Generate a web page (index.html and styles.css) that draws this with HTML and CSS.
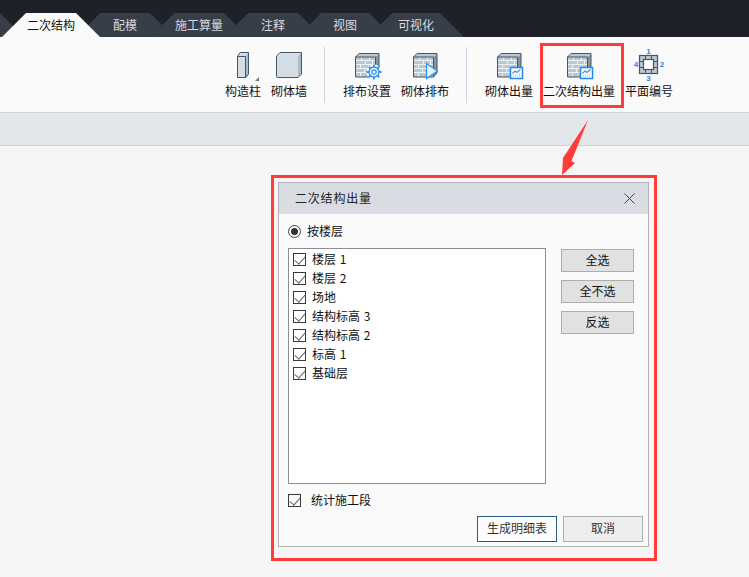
FILE: index.html
```html
<!DOCTYPE html>
<html lang="zh-CN">
<head>
<meta charset="utf-8">
<title>二次结构出量</title>
<link rel="stylesheet" href="styles.css">
</head>
<body>
<svg class="defs" aria-hidden="true">
  <defs>
    <symbol id="wall" viewBox="0 0 32 32">
      <path d="M4.500 8 8 4.500h20V24l-3.500 4H4.500z" fill="#bcc8d0"/>
      <path d="M5 11.500h19M5 15.500h19M5 19.500h19M5 23.500h19M10.500 8v3.500M18.500 8v3.500M14.500 12v3.500M21.500 12v3.500M9.500 16v3.500M17.500 16v3.500M13.500 20v3.500M20.500 20v3.500M9.500 24v4M17.500 24v4" stroke="#eef1f3" stroke-width="1" fill="none"/>
      <path d="M24.500 8.500 28 5v19l-3.500 3.500z" fill="#8496a5"/>
      <path d="M4.500 8 8 4.500h20V24l-3.500 4H4.500zM4.500 8h20v20" fill="none" stroke="#44566a" stroke-width="1"/>
    </symbol>
    <symbol id="chart" viewBox="0 0 32 32">
      <rect x="17.500" y="18.500" width="12" height="11" fill="#fff" stroke="#1e88f0" stroke-width="1.500"/>
      <path d="M19.500 24.500l2.500-2.500 2 1.500 3.500-3" fill="none" stroke="#2f94f3" stroke-width="1.200"/>
      <path d="M20.500 28v-2M22.500 28v-3M24.500 28v-2.500M26.500 28v-4" stroke="#b6d9fa" stroke-width="1"/>
    </symbol>
  </defs>
</svg>

<header class="tabbar">
  <span class="tab tab-stub"></span>
  <span class="tab tab-active">二次结构</span>
  <span class="tab">配模</span>
  <span class="tab">施工算量</span>
  <span class="tab">注释</span>
  <span class="tab tab-small">视图</span>
  <span class="tab tab-small">可视化</span>
</header>

<section class="ribbon">
  <div class="group">
    <div class="tool">
      <svg class="icon" viewBox="0 0 32 32">
        <path d="M10.500 7.500 13 3.500h8.500V25L19 28.500h-8.500z" fill="#d3dde3"/>
        <path d="M18.500 7.500 21.500 3.500V25L18.500 28.500z" fill="#a9bccb"/>
        <path d="M10.500 7.500 13 3.500h8.500V25L19 28.500h-8.500zM10.500 7.500h8v21" fill="none" stroke="#44566a"/>
        <path d="M32 28v4h-4z" fill="#6b7480"/>
      </svg>
      <span>构造柱</span>
    </div>
    <div class="tool">
      <svg class="icon" viewBox="0 0 32 32">
        <path d="M3.500 7 7 3.500h21.500V25L25 28.500H3.500z" fill="#d3dde3"/>
        <path d="M25 7 28.500 3.500V25L25 28.500z" fill="#a9bccb"/>
        <path d="M5.500 28.500h-1a1 1 0 0 1-1-1V7L7 3.500h21.500V25L25 28.500h-20" fill="none" stroke="#44566a"/>
      </svg>
      <span>砌体墙</span>
    </div>
  </div>
  <i class="divider"></i>
  <div class="group">
    <div class="tool">
      <svg class="icon" viewBox="0 0 32 32">
        <use href="#wall"/>
        <circle cx="23" cy="23" r="7.500" fill="#fff"/>
        <circle cx="23" cy="23" r="5" fill="#eaf4fe" stroke="#2a8ff2" stroke-width="1.300"/>
        <circle cx="23" cy="23" r="2.200" fill="#fff" stroke="#2a8ff2" stroke-width="1.200"/>
        <path d="M23 15.500V18M23 28v2.500M15.500 23H18M28 23h2.500M17.700 17.700l1.800 1.800M26.500 26.500l1.800 1.800M17.700 28.300l1.800-1.800M26.500 19.500l1.800-1.800" stroke="#2a8ff2" stroke-width="1.800"/>
      </svg>
      <span>排布设置</span>
    </div>
    <div class="tool">
      <svg class="icon" viewBox="0 0 32 32">
        <use href="#wall"/>
        <path d="M17.500 14.500 28.500 22l-11 7.500z" fill="#e6f2fd" stroke="#2a8ff2" stroke-width="1.200"/>
      </svg>
      <span>砌体排布</span>
    </div>
  </div>
  <i class="divider"></i>
  <div class="group">
    <div class="tool">
      <svg class="icon" viewBox="0 0 32 32"><use href="#wall"/><use href="#chart"/></svg>
      <span>砌体出量</span>
    </div>
    <div class="tool tool-marked">
      <svg class="icon" viewBox="0 0 32 32"><use href="#wall"/><use href="#chart"/></svg>
      <span>二次结构出量</span>
    </div>
    <div class="tool">
      <svg class="icon" viewBox="0 0 32 32">
        <rect x="6.500" y="6.500" width="18" height="18" fill="#bcc8d0" stroke="#44566a" stroke-width="1.200"/>
        <rect x="10.500" y="10.500" width="10" height="10" fill="#fff" stroke="#44566a" stroke-width="1.200"/>
        <path d="M12.500 6.500v4M18.500 6.500v4M12.500 20.500v4M18.500 20.500v4M6.500 12.500h4M6.500 18.500h4M20.500 12.500h4M20.500 18.500h4" stroke="#44566a"/>
        <text class="plan-num" x="15.500" y="4.500">1</text>
        <text class="plan-num" x="29" y="18">2</text>
        <text class="plan-num" x="15.500" y="32">3</text>
        <text class="plan-num" x="3" y="18">4</text>
      </svg>
      <span>平面编号</span>
    </div>
  </div>
</section>

<div class="band"></div>

<main class="canvas">
  <div class="frame">
    <section class="dialog">
      <div class="dialog-title">
        <span class="title-text">二次结构出量</span>
        <svg class="close" viewBox="0 0 11 11"><path d="M.5.5l10 10M10.500.5l-10 10" stroke="#444" stroke-width="1" fill="none"/></svg>
      </div>
      <div class="dialog-body">
        <label class="radio-row"><span class="radio"></span><span class="label">按楼层</span></label>
        <div class="picker">
          <ul class="list">
            <li class="row"><span class="check"></span><span class="label">楼层 1</span></li>
            <li class="row"><span class="check"></span><span class="label">楼层 2</span></li>
            <li class="row"><span class="check"></span><span class="label">场地</span></li>
            <li class="row"><span class="check"></span><span class="label">结构标高 3</span></li>
            <li class="row"><span class="check"></span><span class="label">结构标高 2</span></li>
            <li class="row"><span class="check"></span><span class="label">标高 1</span></li>
            <li class="row"><span class="check"></span><span class="label">基础层</span></li>
          </ul>
          <div class="side">
            <button class="btn-side">全选</button>
            <button class="btn-side">全不选</button>
            <button class="btn-side">反选</button>
          </div>
        </div>
        <label class="stage"><span class="check"></span><span class="label">统计施工段</span></label>
        <div class="actions">
          <button class="btn btn-primary">生成明细表</button>
          <button class="btn">取消</button>
        </div>
      </div>
    </section>
  </div>
  <svg class="arrow" viewBox="0 0 34 62"><path d="M30 0 5 38 4 55 17 43 13.500 41z" fill="#ff3b3b"/></svg>
</main>
</body>
</html>
```

FILE: styles.css
```css
* { box-sizing: border-box; }
html, body { margin: 0; padding: 0; }
body {
  position: relative;
  width: 749px;
  height: 577px;
  overflow: hidden;
  background: #f5f5f5;
  color: #111;
  font: 12px/16px "Noto Sans CJK SC", "Liberation Sans", sans-serif;
}
.defs { position: absolute; width: 0; height: 0; }

.tabbar {
  display: flex;
  height: 37px;
  padding-top: 13px;
  background: #1e2228;
  overflow: hidden;
}
.tab {
  flex: none;
  width: 98px;
  height: 24px;
  margin-left: -24px;
  display: flex;
  align-items: center;
  justify-content: center;
  color: #d6dae0;
  background: linear-gradient(135deg, #262a31 0, #262a31 17.500px, #383e48 17.500px);
  clip-path: polygon(24px 0, calc(100% - 24px) 0, 100% 100%, 0 100%);
}
.tab-small { width: 96px; margin-left: -25px; }
.tab-stub {
  width: 24px;
  margin-left: 0;
  background: #383e48;
  clip-path: polygon(0 0, 100% 100%, 0 100%);
}
.tab-active {
  position: relative;
  z-index: 1;
  margin-left: -22px;
  color: #111;
  background: #fafafa;
}

.ribbon {
  display: flex;
  height: 76px;
  padding: 10px 0 0 225px;
  background: #fafafa;
  border-bottom: 1px solid #cdd3e0;
}
.group { display: flex; gap: 10px; }
.divider {
  width: 1px;
  height: 56px;
  margin: 0 18px 0 17px;
  background: #cdd3e0;
}
.tool {
  position: relative;
  display: flex;
  flex-direction: column;
  align-items: center;
  padding-top: 2px;
  height: 52px;
  white-space: nowrap;
}
.icon { display: block; width: 32px; height: 32px; margin-bottom: 2px; overflow: visible; }
.tool-marked::after {
  content: "";
  position: absolute;
  left: -3px;
  right: -9px;
  top: -4px;
  bottom: -9px;
  border: 3px solid #ff3b3b;
}
.plan-num {
  font: bold 8px "Liberation Sans", sans-serif;
  fill: #1e88f0;
  text-anchor: middle;
}

.band {
  height: 33px;
  background: #e4e7ea;
  border-bottom: 1px solid #cfd2d6;
}

.canvas { padding: 29px 0 0 271px; }
.frame {
  width: 386px;
  height: 386px;
  padding: 4px 5px 11px 4px;
  border: 3px solid #ff3b3b;
}
.dialog {
  height: 100%;
  background: #fafafa;
  border: 1px solid #b4b4b4;
}
.dialog-title {
  display: flex;
  align-items: center;
  justify-content: space-between;
  height: 31px;
  padding: 0 13px 0 16px;
  background: #d9dde3;
}
.title-text { margin-bottom: 2px; letter-spacing: .8px; color: #222; }
.close { width: 11px; height: 11px; }
.label { margin-bottom: 2px; }

.dialog-body { padding: 11px 5px 0 9px; }
.radio-row {
  display: flex;
  align-items: center;
  gap: 6px;
  height: 13px;
}
.radio {
  position: relative;
  width: 13px;
  height: 13px;
  border: 1px solid #444;
  border-radius: 50%;
}
.radio::after {
  content: "";
  position: absolute;
  inset: 2px;
  border-radius: 50%;
  background: #333;
}

.picker { display: flex; margin-top: 10px; }
.list {
  width: 258px;
  height: 236px;
  margin: 0;
  padding: 1px 0 0 4px;
  list-style: none;
  background: #fff;
  border: 1px solid #8a8e96;
}
.row {
  display: flex;
  align-items: center;
  gap: 6px;
  height: 19px;
  word-spacing: 1px;
}
.check {
  position: relative;
  flex: none;
  width: 13px;
  height: 13px;
  border: 1px solid #3a3a3a;
  background: #fff;
}
.check::after {
  content: "";
  position: absolute;
  left: 3px;
  top: 0;
  width: 5px;
  height: 9px;
  border: solid #666;
  border-width: 0 1.500px 1.500px 0;
  transform: rotate(42deg);
}
.side {
  display: flex;
  flex-direction: column;
  gap: 8px;
  width: 73px;
  margin: 1px 0 0 15px;
}
button {
  padding: 0 0 2px;
  font: inherit;
  color: #111;
}
.btn-side {
  height: 23px;
  background: #e1e1e1;
  border: 1px solid #adadad;
}
.stage {
  display: flex;
  align-items: center;
  gap: 10px;
  height: 13px;
  margin-top: 10px;
}
.stage .check { background: transparent; }
.actions {
  display: flex;
  justify-content: flex-end;
  gap: 6px;
  margin-top: 9px;
}
.btn {
  width: 80px;
  height: 26px;
  background: #eeeeee;
  border: 1px solid #adadad;
  color: #333;
}
.btn-primary {
  background: #fdfdfd;
  border-color: #2a5a94;
}

.arrow {
  position: absolute;
  left: 558px;
  top: 120px;
  width: 34px;
  height: 62px;
}
```
